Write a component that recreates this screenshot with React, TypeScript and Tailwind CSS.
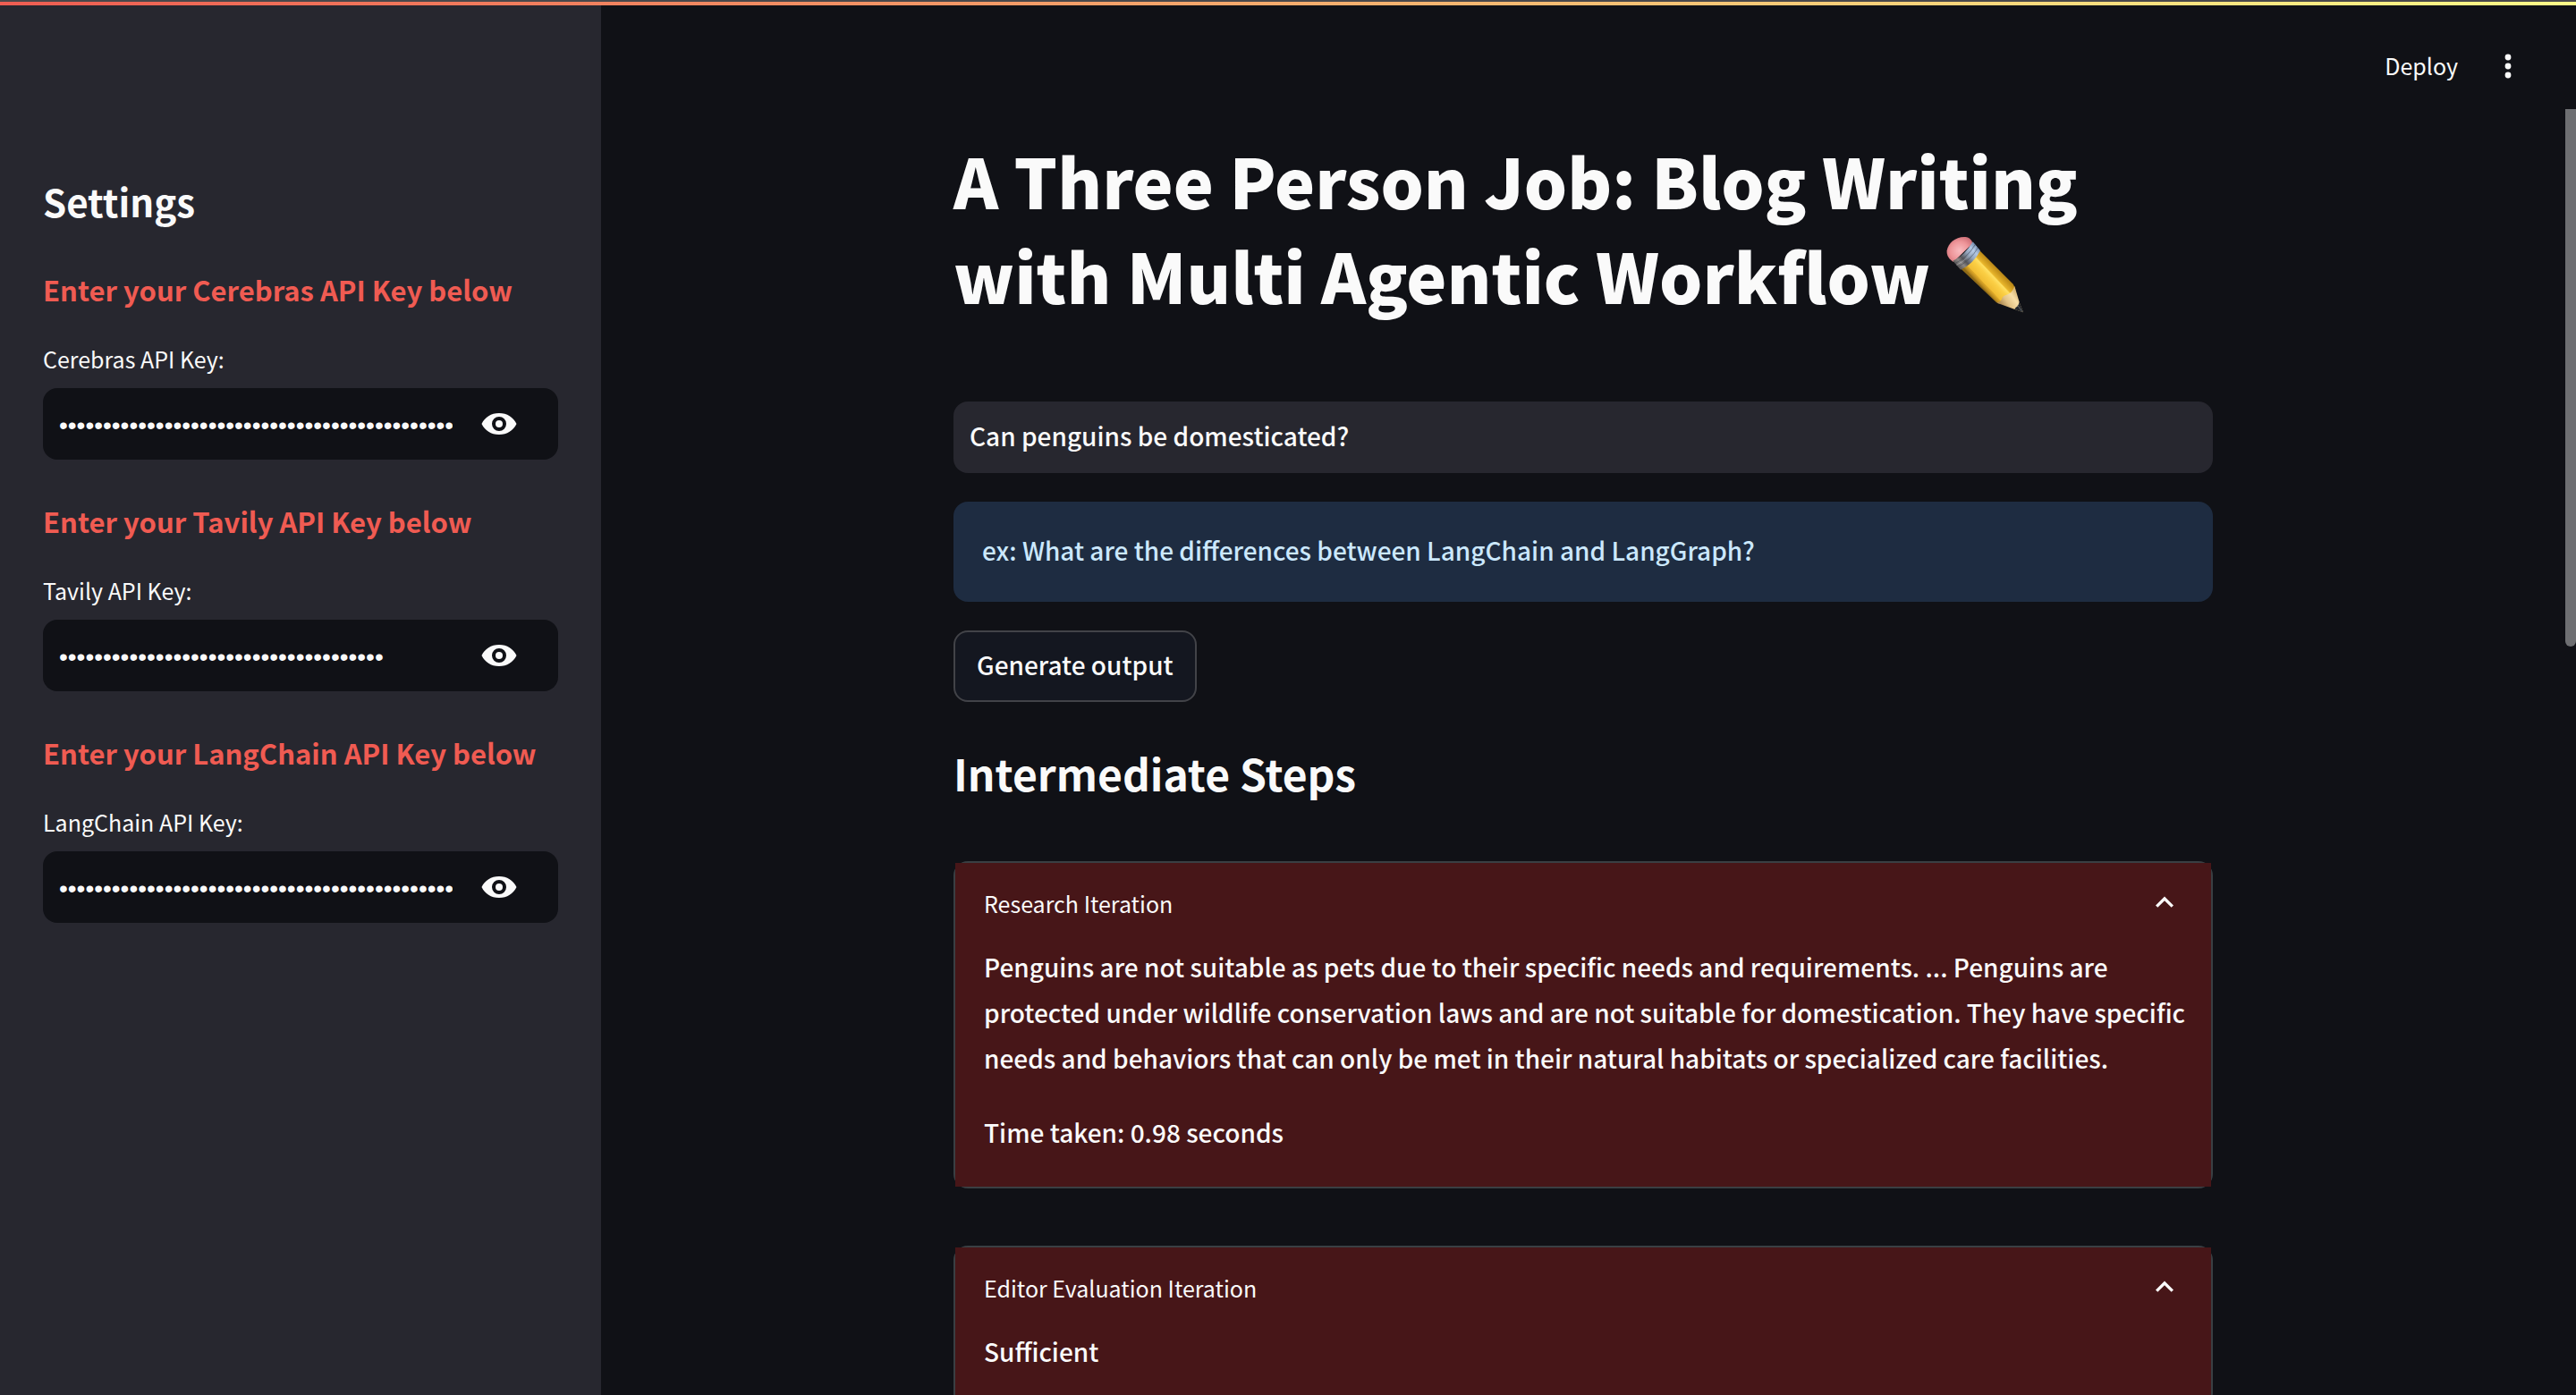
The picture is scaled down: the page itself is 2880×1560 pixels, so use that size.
import type { ReactNode } from "react";

type KeyField = { id: string; heading: string; label: string; value: string };

const keyFields: KeyField[] = [
  { id: "cerebras", heading: "Enter your Cerebras API Key below", label: "Cerebras API Key:", value: "x".repeat(52) },
  { id: "tavily", heading: "Enter your Tavily API Key below", label: "Tavily API Key:", value: "x".repeat(37) },
  { id: "langchain", heading: "Enter your LangChain API Key below", label: "LangChain API Key:", value: "x".repeat(51) },
];

function EyeIcon() {
  return (
    <svg viewBox="0 0 40 40" className="size-10" fill="currentColor" aria-hidden="true">
      <path
        fillRule="evenodd"
        d="M20 8C11 8 4.2 12.6.5 20 4.2 27.400 11 32 20 32s15.800-4.600 19.500-12C35.800 12.600 29 8 20 8Zm0 4a8 8 0 1 1 0 16 8 8 0 0 1 0-16Z"
      />
      <circle cx="20" cy="20" r="4" />
    </svg>
  );
}

function ChevronUp() {
  return (
    <svg viewBox="0 0 24 24" className="size-10" fill="currentColor" aria-hidden="true">
      <path d="M12 7.500l-6 6 1.410 1.410L12 10.330l4.590 4.580L18 13.500z" />
    </svg>
  );
}

function Pencil() {
  return (
    <svg viewBox="60 43 258 258" className="inline-block size-[86px] align-[-10px]" role="img" aria-label="pencil">
      <defs>
        <radialGradient id="eraser" cx="0.5" cy="0.55" r="0.6">
          <stop offset="0" stopColor="#f9bcc0" />
          <stop offset="0.6" stopColor="#ee9599" />
          <stop offset="1" stopColor="#cf6f77" />
        </radialGradient>
        <linearGradient id="ferrule" gradientUnits="userSpaceOnUse" x1="92" y1="146" x2="164" y2="76">
          <stop offset="0" stopColor="#4b4745" />
          <stop offset="0.22" stopColor="#8b8785" />
          <stop offset="0.36" stopColor="#57565a" />
          <stop offset="0.6" stopColor="#93a5bd" />
          <stop offset="0.8" stopColor="#b3c8e4" />
          <stop offset="1" stopColor="#7089ab" />
        </linearGradient>
        <linearGradient id="body" gradientUnits="userSpaceOnUse" x1="172" y1="208" x2="231" y2="152">
          <stop offset="0" stopColor="#8f6a16" />
          <stop offset="0.07" stopColor="#b98a1f" />
          <stop offset="0.19" stopColor="#e2ad2a" />
          <stop offset="0.2" stopColor="#f1bd33" />
          <stop offset="0.5" stopColor="#fbcf45" />
          <stop offset="0.66" stopColor="#ffe063" />
          <stop offset="0.71" stopColor="#e9b62b" />
          <stop offset="1" stopColor="#b98717" />
        </linearGradient>
        <linearGradient id="wood" gradientUnits="userSpaceOnUse" x1="248" y1="278" x2="306" y2="236">
          <stop offset="0" stopColor="#b08d55" />
          <stop offset="0.3" stopColor="#e2c286" />
          <stop offset="0.65" stopColor="#f8dfa8" />
          <stop offset="1" stopColor="#cfab6c" />
        </linearGradient>
      </defs>
      <path d="M108 152 172 92 284 204Q290 212 292 224L250 268Q238 272 228 266Z" fill="url(#body)" />
      <path d="M289 211 306 268 318 299 288 288 230 267Q244 262 247 252 248 244 262 240 280 236 289 211Z" fill="url(#wood)" />
      <path d="M305 264 318 299 289 289Q293 280 298 279 302 275 305 264Z" fill="#23262b" />
      <path d="M300 276 313 295" stroke="#5d6268" strokeWidth="3" />
      <path d="M84 130C70 122 60 108 62 92 66 66 92 44 124 46 138 48 146 56 148 68Z" fill="url(#eraser)" />
      <path d="M82 126Q122 108 149 62L174 92Q150 138 108 156Z" fill="url(#ferrule)" />
      <path d="M89 135Q132 114 157 71M99 146Q142 124 166 82" fill="none" stroke="#3c4654" strokeOpacity="0.55" strokeWidth="3" />
      <path d="M94 140Q136 120 161 76" fill="none" stroke="#dfeafa" strokeOpacity="0.5" strokeWidth="2" />
    </svg>
  );
}

function ApiKey({ field }: { field: KeyField }) {
  return (
    <section>
      <h3 className="text-[31px] leading-11 font-bold text-[#f05b52]">{field.heading}</h3>
      <label htmlFor={field.id} className="mt-[37px] block text-[25px] leading-9">
        {field.label}
      </label>
      <div className="mt-[15px] flex h-20 items-center rounded-2xl bg-[#101116] pr-[14px] pl-[18px]">
        <input
          id={field.id}
          type="password"
          defaultValue={field.value}
          className="min-w-0 flex-1 bg-transparent pt-1 font-['Liberation_Sans',sans-serif] text-[28px] leading-10 outline-none"
        />
        <button type="button" aria-label="Show password text" className="px-8">
          <EyeIcon />
        </button>
      </div>
    </section>
  );
}

function Expander({ title, children }: { title: string; children: ReactNode }) {
  return (
    <details open className="rounded-2xl border-2 border-[#3a3f43] bg-[#471618]">
      <summary className="flex list-none items-center justify-between bg-[#471618] px-8 pt-6 pb-[25px] text-[25px] leading-[42px]">
        {title}
        <ChevronUp />
      </summary>
      <div className="flex flex-col gap-8 bg-[#471618] pr-5 pb-[35px] pl-8 text-[28px] leading-[51px] font-medium">
        {children}
      </div>
    </details>
  );
}

export default function App() {
  return (
    <div className="flex h-screen flex-col overflow-hidden bg-[#101116] font-['Noto_Sans_CJK_SC','Noto_Sans',sans-serif] text-[#fafafa]">
      <div className="h-[2px] shrink-0 bg-[#49484b]" />
      <div className="h-1 shrink-0 bg-linear-to-r/srgb from-[#ee5d52] to-[#fdfb88]" />
      <div className="flex min-h-0 flex-1">
        <aside className="w-[672px] shrink-0 bg-[#27272f] px-12 pt-[190px]">
          <h2 className="text-[42px] leading-[58px] font-bold">Settings</h2>
          <div className="mt-12 flex flex-col gap-[47px]">
            {keyFields.map((f) => (
              <ApiKey key={f.id} field={f} />
            ))}
          </div>
        </aside>
        <div className="flex min-w-0 flex-1 flex-col">
          <header className="flex h-[116px] shrink-0 items-start justify-end gap-9 pt-12 pr-14">
            <button type="button" className="text-[25px] leading-[38px]">
              Deploy
            </button>
            <button type="button" aria-label="Main menu">
              <svg viewBox="0 0 40 40" className="size-10" fill="currentColor" aria-hidden="true">
                <circle cx="20" cy="10" r="3.400" />
                <circle cx="20" cy="20" r="3.400" />
                <circle cx="20" cy="30" r="3.400" />
              </svg>
            </button>
          </header>
          <div className="flex min-h-0 flex-1">
            <main className="min-w-0 flex-1 overflow-hidden pt-[26px]">
              <div className="mx-auto max-w-[1408px]">
                <h1 className="text-[76px] leading-[106px] font-black">
                  A Three Person Job: Blog Writing with Multi Agentic Workflow <Pencil />
                </h1>
                <input
                  type="text"
                  aria-label="Question"
                  defaultValue="Can penguins be domesticated?"
                  className="mt-[89px] block h-20 w-full rounded-2xl bg-[#27272f] px-[18px] pb-1 text-[28px] font-medium outline-none"
                />
                <p className="mt-8 rounded-2xl bg-[#1e2c41] px-8 pt-[29px] pb-8 text-[28px] leading-[51px] font-medium text-[#cbe8fd]">
                  ex: What are the differences between LangChain and LangGraph?
                </p>
                <button
                  type="button"
                  className="mt-8 block h-20 rounded-2xl border-2 border-[#424348] bg-[#141720] px-6 pb-1 text-[28px] font-medium"
                >
                  Generate output
                </button>
                <h2 className="mt-[47px] mb-[67px] text-5xl leading-16 font-bold">Intermediate Steps</h2>
                <div className="flex flex-col gap-16">
                  <Expander title="Research Iteration">
                    <p>
                      Penguins are not suitable as pets due to their specific needs and requirements. ... Penguins are
                      protected under wildlife conservation laws and are not suitable for domestication. They have
                      specific needs and behaviors that can only be met in their natural habitats or specialized care
                      facilities.
                    </p>
                    <p>Time taken: 0.98 seconds</p>
                  </Expander>
                  <Expander title="Editor Evaluation Iteration">
                    <p>Sufficient</p>
                  </Expander>
                </div>
              </div>
            </main>
            <div className="w-3 shrink-0">
              <div className="h-[601px] max-h-full rounded-b-full bg-[#6e6f72]" />
            </div>
          </div>
        </div>
      </div>
    </div>
  );
}
